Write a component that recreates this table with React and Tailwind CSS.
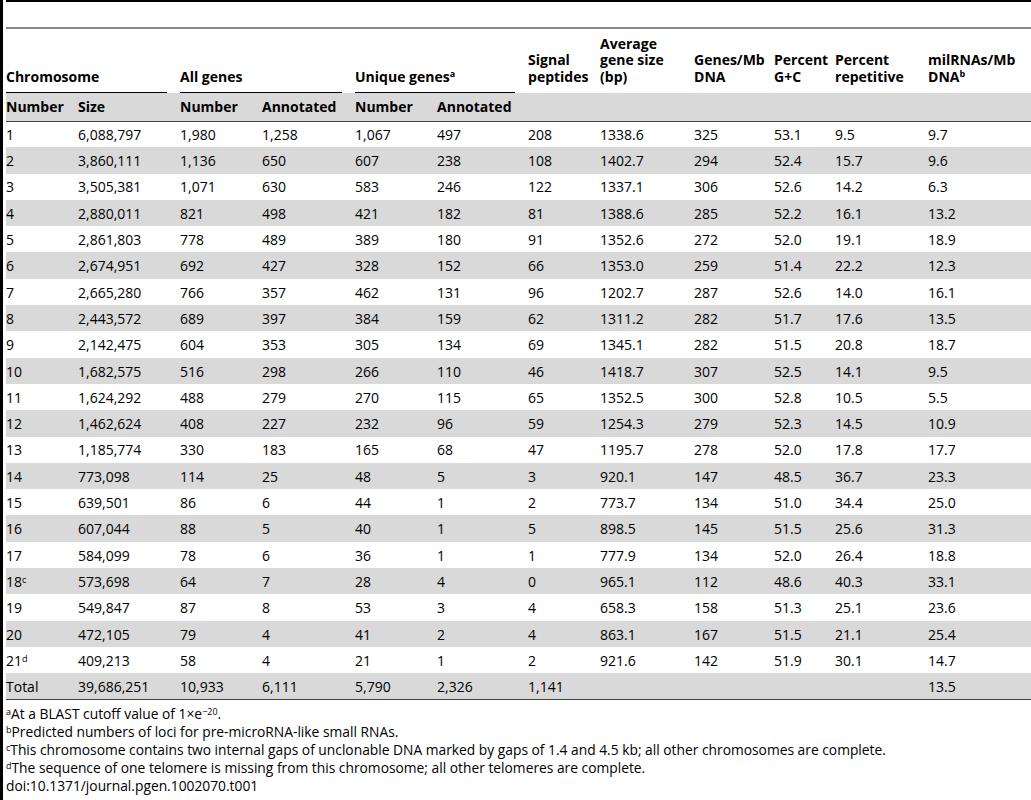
import React from 'react';

const widths = [72, 102, 82, 93, 82, 91, 72, 94, 80, 61, 93, 103];

const rows = [
    ['1', '6,088,797', '1,980', '1,258', '1,067', '497', '208', '1338.6', '325', '53.1', '9.5', '9.7'],
    ['2', '3,860,111', '1,136', '650', '607', '238', '108', '1402.7', '294', '52.4', '15.7', '9.6'],
    ['3', '3,505,381', '1,071', '630', '583', '246', '122', '1337.1', '306', '52.6', '14.2', '6.3'],
    ['4', '2,880,011', '821', '498', '421', '182', '81', '1388.6', '285', '52.2', '16.1', '13.2'],
    ['5', '2,861,803', '778', '489', '389', '180', '91', '1352.6', '272', '52.0', '19.1', '18.9'],
    ['6', '2,674,951', '692', '427', '328', '152', '66', '1353.0', '259', '51.4', '22.2', '12.3'],
    ['7', '2,665,280', '766', '357', '462', '131', '96', '1202.7', '287', '52.6', '14.0', '16.1'],
    ['8', '2,443,572', '689', '397', '384', '159', '62', '1311.2', '282', '51.7', '17.6', '13.5'],
    ['9', '2,142,475', '604', '353', '305', '134', '69', '1345.1', '282', '51.5', '20.8', '18.7'],
    ['10', '1,682,575', '516', '298', '266', '110', '46', '1418.7', '307', '52.5', '14.1', '9.5'],
    ['11', '1,624,292', '488', '279', '270', '115', '65', '1352.5', '300', '52.8', '10.5', '5.5'],
    ['12', '1,462,624', '408', '227', '232', '96', '59', '1254.3', '279', '52.3', '14.5', '10.9'],
    ['13', '1,185,774', '330', '183', '165', '68', '47', '1195.7', '278', '52.0', '17.8', '17.7'],
    ['14', '773,098', '114', '25', '48', '5', '3', '920.1', '147', '48.5', '36.7', '23.3'],
    ['15', '639,501', '86', '6', '44', '1', '2', '773.7', '134', '51.0', '34.4', '25.0'],
    ['16', '607,044', '88', '5', '40', '1', '5', '898.5', '145', '51.5', '25.6', '31.3'],
    ['17', '584,099', '78', '6', '36', '1', '1', '777.9', '134', '52.0', '26.4', '18.8'],
    [['18', 'c'], '573,698', '64', '7', '28', '4', '0', '965.1', '112', '48.6', '40.3', '33.1'],
    ['19', '549,847', '87', '8', '53', '3', '4', '658.3', '158', '51.3', '25.1', '23.6'],
    ['20', '472,105', '79', '4', '41', '2', '4', '863.1', '167', '51.5', '21.1', '25.4'],
    [['21', 'd'], '409,213', '58', '4', '21', '1', '2', '921.6', '142', '51.9', '30.1', '14.7'],
    ['Total', '39,686,251', '10,933', '6,111', '5,790', '2,326', '1,141', '', '', '', '', '13.5'],
];

// raised with a relative offset so the line box keeps its height
const Sup = ({ children }) => <sup className="relative -top-[0.45em] align-baseline text-[9px] leading-none">{children}</sup>;

const GroupHead = ({ span = 1, line, children }) => (
    <th colSpan={span} className="p-0 align-bottom text-left font-bold">
        <div className={line ? 'mr-[13px] border-b border-black pb-[7px]' : 'pb-[8px] pr-1'}>{children}</div>
    </th>
);

export default function App() {
    return (
        <div className="flex min-h-[800px] bg-white text-black" style={{ fontFamily: '"Open Sans", "Liberation Sans", sans-serif' }}>
            <div className="w-[3px] shrink-0 bg-black" />
            <div className="ml-[3px] w-[1025px]">
                <div className="h-[2px] bg-black" />
                <div className="h-[25px]" />
                <div className="h-[2px] bg-[#8a8a8a]" />
                <table className="w-[1025px] table-fixed border-collapse text-[14px] leading-[16.5px]">
                    <colgroup>
                        {widths.map((w, i) => <col key={i} style={{ width: w }} />)}
                    </colgroup>
                    <thead>
                        <tr className="h-[64px]">
                            <GroupHead span={2} line>Chromosome</GroupHead>
                            <GroupHead span={2} line>All genes</GroupHead>
                            <GroupHead span={2} line>Unique genes<Sup>a</Sup></GroupHead>
                            <GroupHead>Signal peptides</GroupHead>
                            <GroupHead>Average gene size (bp)</GroupHead>
                            <GroupHead>Genes/Mb DNA</GroupHead>
                            <GroupHead>Percent G+C</GroupHead>
                            <GroupHead>Percent repetitive</GroupHead>
                            <GroupHead>milRNAs/Mb DNA<Sup>b</Sup></GroupHead>
                        </tr>
                        <tr className="h-[28px] border-b border-[#444] bg-[#d9d9d9]">
                            {['Number', 'Size', 'Number', 'Annotated', 'Number', 'Annotated', '', '', '', '', '', ''].map((t, i) => (
                                <th key={i} className="p-0 text-left font-bold">{t}</th>
                            ))}
                        </tr>
                    </thead>
                    <tbody>
                        {rows.map((r, ri) => (
                            <tr key={ri} className={`h-[26.3px] ${ri % 2 === 1 ? 'bg-[#d9d9d9]' : 'bg-white'} ${ri === rows.length - 1 ? 'border-b border-[#444]' : ''}`}>
                                {r.map((c, ci) => (
                                    <td key={ci} className="p-0 pt-[2px] text-left whitespace-nowrap">
                                        {Array.isArray(c) ? <>{c[0]}<Sup>{c[1]}</Sup></> : c}
                                    </td>
                                ))}
                            </tr>
                        ))}
                    </tbody>
                </table>
                <div className="pt-[5px] text-[13.8px] leading-[18px]">
                    <p><Sup>a</Sup>At a BLAST cutoff value of 1×e<Sup>−20</Sup>.</p>
                    <p><Sup>b</Sup>Predicted numbers of loci for pre-microRNA-like small RNAs.</p>
                    <p><Sup>c</Sup>This chromosome contains two internal gaps of unclonable DNA marked by gaps of 1.4 and 4.5 kb; all other chromosomes are complete.</p>
                    <p><Sup>d</Sup>The sequence of one telomere is missing from this chromosome; all other telomeres are complete.</p>
                    <p>doi:10.1371/journal.pgen.1002070.t001</p>
                </div>
            </div>
        </div>
    );
}
